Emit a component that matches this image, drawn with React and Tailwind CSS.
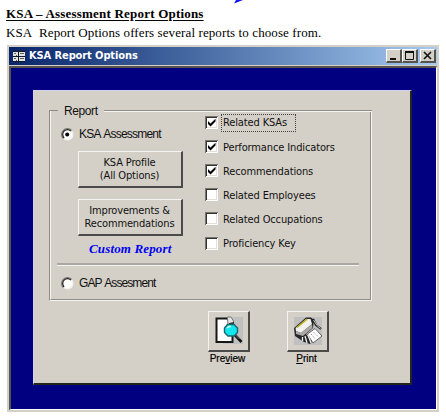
const ui = "font-['DejaVu_Sans_Condensed','DejaVu_Sans',sans-serif] font-stretch-condensed";
const sans = "font-['Liberation_Sans',Arial,sans-serif]";
const serif = "font-['Liberation_Serif',serif]";

function Radio({ checked }) {
  return (
    <svg width="13" height="13" viewBox="0 0 13 13" className="shrink-0">
      <circle cx="6.5" cy="6.5" r="5.2" fill="#fff" stroke="#f4f2ee" strokeWidth="1.6" />
      <path d="M2.3 10.7A5.8 5.8 0 0 1 10.7 2.3" fill="none" stroke="#77756f" strokeWidth="1.1" />
      <path d="M3.1 9.9A4.8 4.8 0 0 1 9.9 3.1" fill="none" stroke="#1c1c1c" strokeWidth="1.2" />
      {checked && <circle cx="6.2" cy="6.4" r="2" fill="#000" />}
    </svg>
  );
}

function Check({ label, checked, focused }) {
  return (
    <div className="flex h-[24.2px] items-center">
      <svg width="13" height="13" viewBox="0 0 13 13" className="mb-[2px] shrink-0" shapeRendering="crispEdges">
        <path d="M0 0H13V13H0Z" fill="#fff" />
        <path d="M0 13V0H13V1H1V13Z" fill="#77756f" />
        <path d="M1 12V1H12V2H2V12Z" fill="#343434" />
        <path d="M2 11H11V2H12V12H2Z" fill="#e2dfd8" />
        {checked && <path d="M3 5V8L5.5 10.5L10.5 5.5V2.8L5.5 7.5Z" fill="#000" shapeRendering="auto" />}
      </svg>
      <span className={`ml-[3px] flex h-[18px] items-center whitespace-nowrap border border-dotted pl-px pt-px text-[11px] tracking-[-0.13px] ${focused ? "w-[75px] border-[#404040]" : "border-transparent"}`}>
        {label}
      </span>
    </div>
  );
}

function PushButton({ children, className = "" }) {
  return (
    <button className={`flex items-center justify-center border-b-2 border-l border-r-2 border-t border-b-[#4a4a48] border-l-[#f5f4f0] border-r-[#4a4a48] border-t-[#f5f4f0] bg-[#d4d0c8] text-center text-[11px] leading-[13px] tracking-[-0.15px] ${className}`}>
      {children}
    </button>
  );
}

function FormIcon() {
  return (
    <svg width="12" height="11" viewBox="0 0 12 11" shapeRendering="crispEdges">
      <path d="M0 0H12V11H0Z" fill="#111827" />
      <path d="M0 1H5V5H0ZM0 6H5V10H0ZM6 1H12V5H6ZM6 6H12V10H6Z" fill="#e2e4df" />
      <path d="M1 2H3V3H1ZM1 7H3V8H1ZM7 2H11V3H7ZM7 7H11V8H7ZM3 4H4V5H3ZM3 9H4V10H3Z" fill="#59615f" />
    </svg>
  );
}

function CaptionButton({ children, className = "" }) {
  return (
    <div className={`h-[14px] w-4 border-b-2 border-l border-r-2 border-t border-b-[#55534e] border-l-white border-r-[#55534e] border-t-white bg-[#d4d0c8] ${className}`}>
      <svg width="13" height="11" viewBox="0 0 13 11">{children}</svg>
    </div>
  );
}

function PreviewIcon() {
  return (
    <svg width="30" height="30" viewBox="0 0 30 30">
      <path d="M9 1H29V28H9Z" fill="#c0c0c0" />
      <path d="M2.5 2.5H13L18.5 8V26H2.5Z" fill="#fff" stroke="#161616" strokeWidth="2" />
      <path d="M13.5 1L17 1L19.5 5V10H14Z" fill="#e5e5e5" stroke="#777" />
      <path d="M15 7L20 6V9H15Z" fill="#333" />
      <path d="M20 18L27.5 26" stroke="#111" strokeWidth="2.6" />
      <path d="M20.5 18L25.5 23" stroke="#aaa" strokeWidth=".7" />
      <path d="M13.5 8.5H20L23.5 12V16.5L20 20H14L10.5 16.5V12Z" fill="#14e6ee" stroke="#16666d" strokeWidth="1.4" />
      <path d="M13 12L15 10.5H17" stroke="#d7ffff" strokeWidth="1.5" fill="none" />
    </svg>
  );
}

function PrintIcon() {
  return (
    <svg width="30" height="30" viewBox="0 0 30 30">
      <path d="M1 1H29V29H1Z" fill="#c0c0c0" />
      <path d="M1 12L13 1.5H18L21 4L20 12L13 18L19 26L17 28L11 26L2 20Z" fill="#262626" />
      <path d="M2.5 12L13 3L17.5 3L19 8L8 17L3 15Z" fill="#f1f1ef" />
      <path d="M4 11.5L14 3.2" stroke="#b9ac18" strokeWidth="1.5" />
      <path d="M3 15L8 17L19 8L19.5 12L10 20L3 18Z" fill="#aaa9a6" />
      <path d="M20 3L23 9L28 13" stroke="#1d1d1d" strokeWidth="2.2" fill="none" />
      <path d="M20.5 4L24 9.5L27.5 12.5" stroke="#ddd" strokeWidth=".9" fill="none" />
      <path d="M14.5 18L22 12.5L29 20L20 27Z" fill="#fff" stroke="#444" strokeWidth=".8" />
      <path d="M18 18L22.5 23M20.5 16L25.5 21" stroke="#999" strokeDasharray="1.3 1" />
      <path d="M9.5 21V25M12 20L14 27M15 19L18 27" fill="none" stroke="#eee" strokeWidth="1.3" />
    </svg>
  );
}

function IconButton({ icon, children, className = "" }) {
  return (
    <div className={`flex w-[42px] flex-col items-center ${className}`}>
      <PushButton className="h-[41px] w-[42px] shrink-0">{icon}</PushButton>
      <span className={`${sans} mr-[3px] mt-px whitespace-nowrap text-[10px] leading-[12px] text-black [-webkit-text-stroke:0.2px_#000]`}>{children}</span>
    </div>
  );
}

export default function App() {
  return (
    <main className="relative h-[420px] w-[446px] overflow-hidden bg-white pl-[7px] text-[#111]">
      <svg className="absolute left-[234px] top-0" width="10" height="4" viewBox="0 0 10 4">
        <path d="M2 0H9L0 3.5Z" fill="#1414ff" />
      </svg>
      <header className={`${serif} h-[45px] whitespace-nowrap pt-[6px] text-[13px] text-black`}>
        <h1 className="ml-[-1px] h-[19px] text-[13px] font-bold leading-[16px] tracking-[0.2px] underline decoration-1 underline-offset-[2px]">KSA – Assessment Report Options</h1>
        <p className="ml-[-1px] leading-[16px] tracking-[0.1px]">KSA&nbsp; Report Options offers several reports to choose from.</p>
      </header>
      <section className={`${ui} flex h-[367px] w-[432px] flex-col border-2 border-[#d4d0c8] bg-[#d4d0c8]`}>
        <div className="flex h-[18px] shrink-0 items-center bg-linear-to-r from-[#0a246a] to-[#a6caf0] pl-[4px] pr-px">
          <FormIcon />
          <b className="ml-[4px] mt-px whitespace-nowrap text-[11px] tracking-[-0.1px] text-white">KSA Report Options</b>
          <div className="ml-auto flex">
            <CaptionButton><path d="M3 8H9V10H3Z" fill="#111" /></CaptionButton>
            <CaptionButton><path d="M2.5 1.5H10.5V9.5H2.5Z" fill="none" stroke="#111" /><path d="M2 1H11V3H2Z" fill="#111" /></CaptionButton>
            <CaptionButton className="ml-[2px]"><path d="M3 2L10 9M10 2L3 9" stroke="#111" strokeWidth="1.6" /></CaptionButton>
          </div>
        </div>
        <div className="mt-px flex-1 border-b border-l-2 border-r border-t-2 border-b-white border-l-[#55534e] border-r-white border-t-[#55534e] bg-[#000080] pl-[22px] pt-[22px]">
          <div className="h-[295px] w-[379px] border-b-2 border-l border-r-2 border-t border-b-[#24241f] border-l-[#d8d4e8] border-r-[#24241f] border-t-[#d4d0f0] bg-[#d4d0c8] pl-[15px] pt-[14px]">
            <div className="flex h-3 w-[323px] items-center">
              <i className="h-[7px] w-[9px] shrink-0 self-end border-l border-t border-[#8f8d88]" />
              <span className={`${sans} pl-[6px] pr-[6px] text-[12px] leading-3 tracking-[-0.4px]`}>Report</span>
              <i className="h-[2px] flex-1 border-b border-t border-b-[#f5f4f0] border-t-[#8f8d88]" />
            </div>
            <div className="mt-[-6px] h-[190px] w-[323px] border-b border-l border-r border-[#f5f4f0] border-l-[#8f8d88]">
              <div className="flex h-full flex-col border-b border-l border-r border-b-[#8f8d88] border-l-[#f5f4f0] border-r-[#8f8d88]">
                <div className="flex h-[151px]">
                  <div className="w-[154px] pl-[10px] pt-[17px]">
                    <div className={`${sans} flex items-center gap-[5px] whitespace-nowrap text-[12px] leading-[13px] tracking-[-0.8px] [word-spacing:1.5px]`}><Radio checked />KSA Assessment</div>
                    <PushButton className="ml-[17px] mt-[10px] h-[37px] w-[105px]"><span className="mr-px">KSA Profile<br />(All Options)</span></PushButton>
                    <PushButton className="ml-[17px] mt-[11px] h-[37px] w-[105px]"><span className="mr-px">Improvements &amp;<br />Recommendations</span></PushButton>
                    <div className={`${serif} ml-[28px] mt-[6px] whitespace-nowrap text-[13px] font-bold italic leading-[14px] tracking-[0.15px] text-[#0000f0]`}>Custom Report</div>
                  </div>
                  <div>
                    <Check label="Related KSAs" checked focused />
                    <Check label="Performance Indicators" checked />
                    <Check label="Recommendations" checked />
                    <Check label="Related Employees" />
                    <Check label="Related Occupations" />
                    <Check label="Proficiency Key" />
                  </div>
                </div>
                <hr className="ml-[6px] mt-px h-[3px] w-[302px] border-b border-t-2 border-b-[#f5f4f0] border-t-[#aaa7a3]" />
                <div className={`${sans} ml-[10px] mt-[11px] flex items-center gap-[5px] text-[12px] leading-[13px] tracking-[-0.9px] [word-spacing:1px]`}><Radio />GAP Assesment</div>
              </div>
            </div>
            <div className="flex pl-[159px] pt-[10px]">
              <IconButton icon={<PreviewIcon />}>Pre<u>v</u>iew</IconButton>
              <IconButton icon={<PrintIcon />} className="ml-[37px]"><u>P</u>rint</IconButton>
            </div>
          </div>
        </div>
      </section>
    </main>
  );
}
